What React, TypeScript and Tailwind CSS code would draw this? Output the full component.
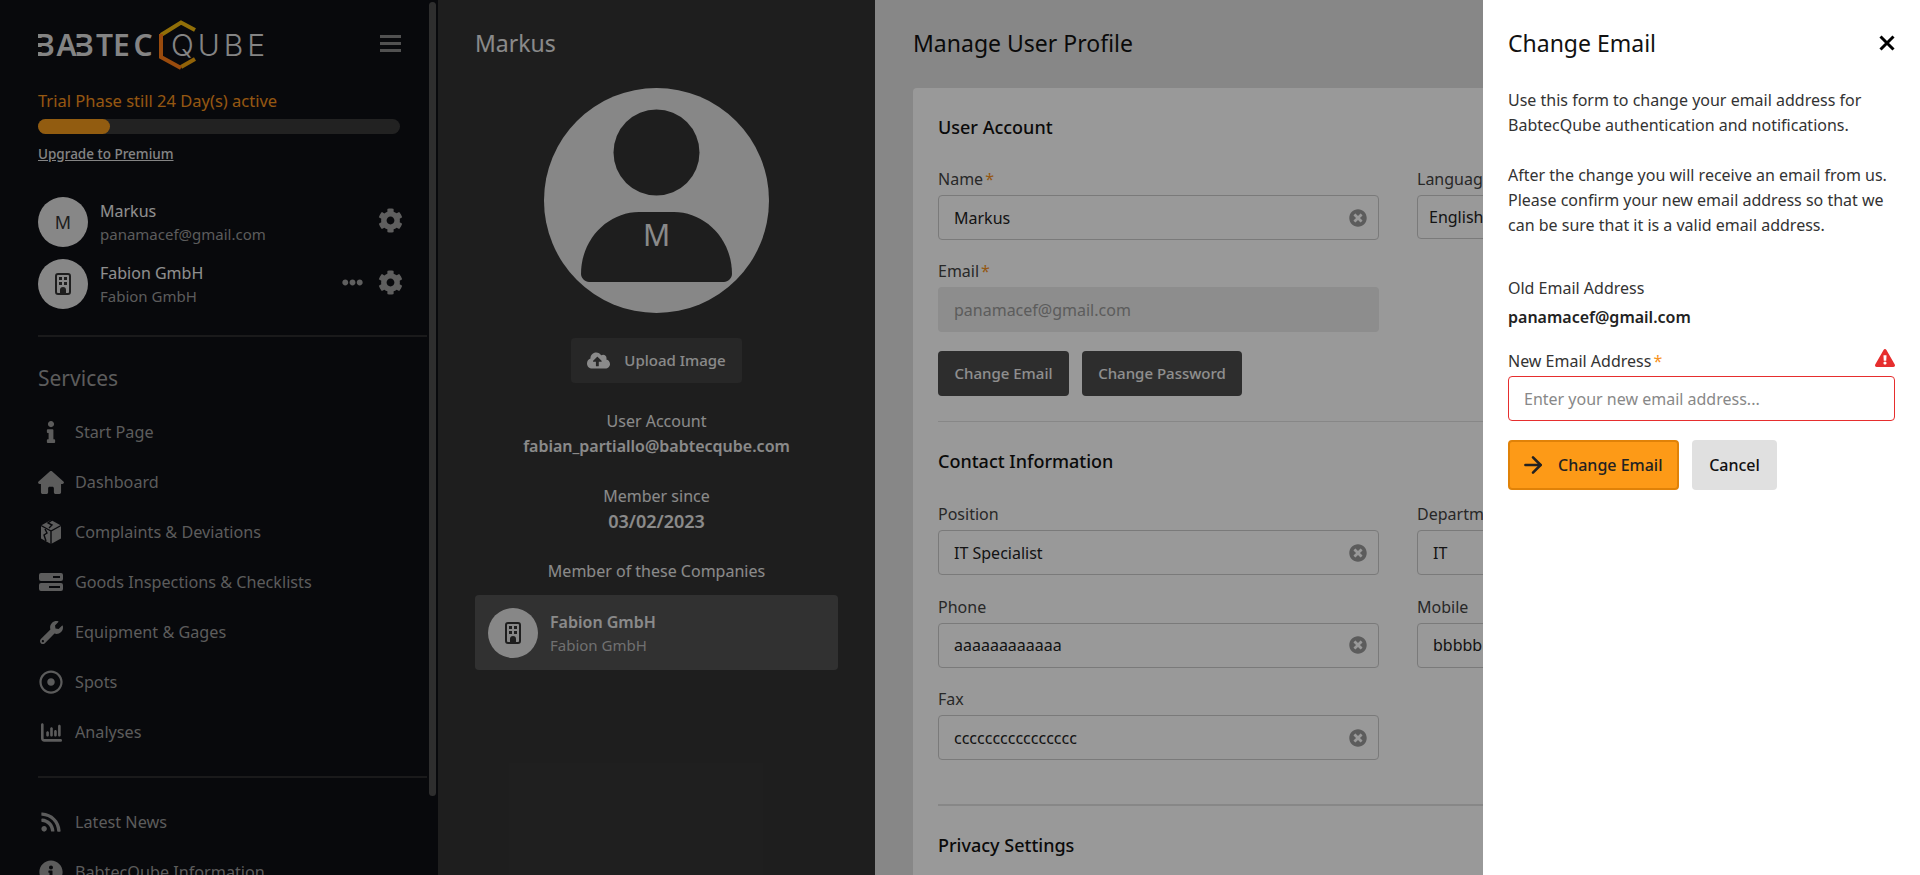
import React from 'react';
import { ArrowRight } from 'lucide-react';
import {
  FaCog,
  FaInfo,
  FaWrench,
  FaRegDotCircle,
  FaRss,
  FaInfoCircle,
  FaEllipsisH,
  FaCloudUploadAlt,
  FaTimesCircle,
  FaExclamationTriangle,
} from 'react-icons/fa';
import { FaHouse, FaChartColumn } from 'react-icons/fa6';

// Cracked cube used for complaints
const CubeIcon = () => (
  <svg width="22" height="24" viewBox="0 0 22 24" fill="currentColor">
    <path d="M11 0 L21 5.5 V18.5 L11 24 L1 18.5 V5.5 Z" />
    <path d="M1 5.5 L11 11 L21 5.5 M11 11 V24" fill="none" stroke="#0e0f14" strokeWidth="1.4" />
    <path d="M12 0 L8 3 L12 5 L9 8 M5 9 L7 13 L4 15 L6 21" fill="none" stroke="#0e0f14" strokeWidth="1.4" />
  </svg>
);

// Two stacked drives
const DrivesIcon = () => (
  <svg width="24" height="18" viewBox="0 0 24 18" fill="currentColor">
    <path fillRule="evenodd" d="M2 0 H22 a2 2 0 0 1 2 2 V6 a2 2 0 0 1 -2 2 H2 a2 2 0 0 1 -2 -2 V2 a2 2 0 0 1 2 -2 Z M14 3 V5 H21 V3 Z" />
    <path fillRule="evenodd" d="M2 10 H22 a2 2 0 0 1 2 2 V16 a2 2 0 0 1 -2 2 H2 a2 2 0 0 1 -2 -2 V12 a2 2 0 0 1 2 -2 Z M10 13 V15 H21 V13 Z" />
  </svg>
);

const BuildingIcon = () => (
  <svg width="16" height="22" viewBox="0 0 16 22" fill="none">
    <rect x="1" y="1" width="14" height="20" rx="2" stroke="#333" strokeWidth="2" />
    <path d="M4 4 H7 V7 H4 Z M9 4 H12 V7 H9 Z M4 9 H7 V12 H4 Z M9 9 H12 V12 H9 Z M5 21 V17 a3 3 0 0 1 6 0 V21 Z" fill="#333" />
  </svg>
);

const navItems = [
  { label: 'Start Page', icon: <FaInfo className="w-[12px] h-[22px]" /> },
  { label: 'Dashboard', icon: <FaHouse className="w-[26px] h-[23px]" /> },
  { label: 'Complaints & Deviations', icon: <CubeIcon /> },
  { label: 'Goods Inspections & Checklists', icon: <DrivesIcon /> },
  { label: 'Equipment & Gages', icon: <FaWrench className="w-[23px] h-[23px]" /> },
  { label: 'Spots', icon: <FaRegDotCircle className="w-[24px] h-[24px]" /> },
  { label: 'Analyses', icon: <FaChartColumn className="w-[23px] h-[21px]" /> },
];

const Field = ({ label, value, required }: { label: string; value: string; required?: boolean }) => (
  <div className="flex flex-col">
    <label className="text-[16px] leading-[20px] mb-[6px] text-[#444]">
      {label}
      {required && <span className="text-[#f7931e] ml-[2px]">*</span>}
    </label>
    <div className="h-[45px] rounded-[4px] border border-[#ccc] bg-white flex items-center pl-[15px] pr-[11px] text-[16px] text-[#222]">
      <span className="flex-1">{value}</span>
      <FaTimesCircle className="w-[18px] h-[18px] text-[#999]" />
    </div>
  </div>
);

const BuildingAvatar = () => (
  <div className="w-[50px] h-[50px] rounded-full bg-[#e2e2e2] flex items-center justify-center shrink-0">
    <BuildingIcon />
  </div>
);

const NavRow = ({ label, icon }: { label: string; icon: React.ReactNode }) => (
  <div className="h-[50px] flex items-center text-[16.2px] text-[#999]">
    <span className="w-[26px] mr-[11px] flex justify-center">{icon}</span>
    {label}
  </div>
);

export default function App() {
  return (
    <div className="relative h-[875px] w-[1920px] overflow-hidden flex font-['Noto_Sans',sans-serif]">
      {/* Sidebar */}
      <aside className="relative w-[438px] shrink-0 bg-[#0e0f14] overflow-hidden pl-[38px] pr-[11px] pt-[20px] text-[#eee]">
        <div className="flex items-center justify-between pr-[26px] h-[50px]">
          <svg width="228" height="50" viewBox="0 0 228 50" className="block">
            <text x="-3 18.5 36 58 75 95.5" y="36" fontFamily="'Noto Sans', sans-serif" fontWeight="600" fontSize="30" fill="#dcdcdc">
              BABTEC
            </text>
            {/* the logo's B has no stem between its arms */}
            <rect x="-2" y="18" width="6" height="5" fill="#0e0f14" />
            <rect x="-2" y="27" width="6" height="5" fill="#0e0f14" />
            <rect x="37" y="18" width="6" height="5" fill="#0e0f14" />
            <rect x="37" y="27" width="6" height="5" fill="#0e0f14" />
            <path d="M123 15 L143 2.5 L157 10" fill="none" stroke="#f2b90e" strokeWidth="4" />
            <path d="M143 47 L157 39" fill="none" stroke="#f2a50e" strokeWidth="4" />
            <path d="M123 14 V37 L143 48" fill="none" stroke="#ff7d16" strokeWidth="4" />
            <text x="133" y="36" fontFamily="Inter, sans-serif" fontWeight="300" fontSize="30" textLength="94" fill="#dcdcdc">
              QUBE
            </text>
          </svg>
          <div className="flex flex-col gap-[4px] w-[21px] mb-[3px]">
            <div className="h-[3px] bg-[#888]" />
            <div className="h-[3px] bg-[#888]" />
            <div className="h-[3px] bg-[#888]" />
          </div>
        </div>
        <div className="mt-[21px] pr-[27px]">
          <p className="text-[#f7931e] text-[16.5px] leading-[20px]">Trial Phase still 24 Day(s) active</p>
          <div className="h-[15px] mt-[8px] rounded-full bg-[#3a3a3a]">
            <div className="h-full w-[72px] rounded-full bg-[#f39a1b]" />
          </div>
          <a className="block mt-[11px] text-[13.5px] leading-[18px] font-medium underline text-[#ddd]">Upgrade to Premium</a>
        </div>

        <div className="mt-[34px] flex items-center gap-[12px] pr-[24px]">
          <div className="w-[50px] h-[50px] rounded-full bg-[#e2e2e2] text-[#333] text-[18px] flex items-center justify-center">M</div>
          <div className="flex-1">
            <p className="text-[16px] leading-[24px]">Markus</p>
            <p className="text-[15px] leading-[22px] text-[#999]">panamacef@gmail.com</p>
          </div>
          <FaCog className="w-[25px] h-[25px] mb-[3px] text-[#9e9e9e]" />
        </div>
        <div className="mt-[12px] flex items-center gap-[12px] pr-[24px]">
          <BuildingAvatar />
          <div className="flex-1">
            <p className="text-[16px] leading-[24px]">Fabion GmbH</p>
            <p className="text-[15px] leading-[22px] text-[#999]">Fabion GmbH</p>
          </div>
          <FaEllipsisH className="w-[21px] h-[21px] mb-[3px] text-[#9e9e9e] mr-[3px]" />
          <FaCog className="w-[25px] h-[25px] mb-[3px] text-[#9e9e9e]" />
        </div>

        <div className="h-[2px] bg-[#2c2c2e] mt-[26px]" />
        <h3 className="mt-[27px] text-[21px] leading-[28px] text-[#999]">Services</h3>
        <nav className="mt-[15px] flex flex-col">
          {navItems.map((item) => (
            <NavRow key={item.label} label={item.label} icon={item.icon} />
          ))}
        </nav>
        <div className="h-[2px] bg-[#2c2c2e] mt-[19px]" />
        <div className="mt-[19px] flex flex-col">
          <NavRow label="Latest News" icon={<FaRss className="w-[22px] h-[22px]" />} />
          <NavRow label="BabtecQube Information" icon={<FaInfoCircle className="w-[24px] h-[24px]" />} />
        </div>
        {/* scrollbar thumb */}
        <div className="absolute right-[2px] top-[2px] w-[7px] h-[794px] rounded-full bg-[#4e4e4e]" />
      </aside>

      {/* Profile panel */}
      <section className="w-[437px] shrink-0 bg-[#333] px-[37px] pt-[27px] text-[#e6e6e6] flex flex-col items-center">
        <h2 className="self-start text-[23px] leading-[32px]">Markus</h2>
        <div className="relative mt-[29px]">
          <svg width="225" height="225" viewBox="0 0 225 225" className="block">
            <circle cx="112.5" cy="112.5" r="112.5" fill="#e2e2e2" />
            <circle cx="112.5" cy="64.5" r="43" fill="#333" />
            <path d="M37 186 C37 150 65 124 95 124 H130 C160 124 188 150 188 186 C188 190 184 194 180 194 H45 C41 194 37 190 37 186 Z" fill="#333" />
          </svg>
          <span className="absolute left-0 right-0 top-[128px] text-center text-[30px] leading-[38px]">M</span>
        </div>
        <button className="mt-[25px] w-[171px] h-[45px] rounded-[4px] bg-[#414141] flex items-center justify-center gap-[14px] text-[15px] font-medium">
          <FaCloudUploadAlt className="w-[23px] h-[23px]" />
          Upload Image
        </button>
        <p className="mt-[26px] text-[16px] leading-[25px]">User Account</p>
        <p className="text-[16px] leading-[25px] font-semibold">fabian_partiallo@babtecqube.com</p>
        <p className="mt-[25px] text-[16px] leading-[25px]">Member since</p>
        <p className="text-[18px] leading-[25px] font-semibold">03/02/2023</p>
        <p className="mt-[25px] text-[16px] leading-[25px]">Member of these Companies</p>
        <div className="mt-[11px] self-stretch h-[75px] rounded-[4px] bg-[#525252] flex items-center gap-[12px] pl-[13px]">
          <BuildingAvatar />
          <div>
            <p className="text-[16px] leading-[24px] font-semibold">Fabion GmbH</p>
            <p className="text-[15px] leading-[22px] text-[#bbb]">Fabion GmbH</p>
          </div>
        </div>
      </section>

      {/* Main */}
      <main className="flex-1 bg-[#e2e2e2] pl-[38px] pr-[34px] pt-[27px] text-[#222]">
        <h1 className="text-[23px] leading-[32px] text-[#111]">Manage User Profile</h1>
        <div className="mt-[29px] rounded-[4px] bg-white px-[25px] pt-[26px] pb-[20px]">
          <h3 className="text-[18px] leading-[26px] font-medium text-[#111]">User Account</h3>
          <div className="mt-[29px] grid grid-cols-[441px_441px] gap-x-[38px] gap-y-[21px]">
            <Field label="Name" value="Markus" required />
            <div className="flex flex-col">
              <label className="text-[16px] leading-[20px] mb-[6px] text-[#444]">Language</label>
              <div className="h-[44px] rounded-[4px] border border-[#ccc] bg-white flex items-center pl-[11px] text-[16px] text-[#222]">English</div>
            </div>
            <div className="flex flex-col">
              <label className="text-[16px] leading-[20px] mb-[6px] text-[#444]">
                Email<span className="text-[#f7931e] ml-[2px]">*</span>
              </label>
              <div className="h-[45px] rounded-[4px] bg-[#ebebeb] flex items-center pl-[16px] text-[16px] text-[#999]">panamacef@gmail.com</div>
            </div>
          </div>
          <div className="mt-[19px] flex gap-[13px]">
            <button className="w-[131px] h-[45px] rounded-[4px] bg-[#4b4b4b] text-[#eee] text-[15px] font-medium">Change Email</button>
            <button className="w-[160px] h-[45px] rounded-[4px] bg-[#4b4b4b] text-[#eee] text-[15px] font-medium">Change Password</button>
          </div>
          <div className="h-px bg-[#e2e2e2] mt-[25px]" />
          <h3 className="mt-[26px] text-[18px] leading-[26px] font-medium text-[#111]">Contact Information</h3>
          <div className="mt-[30px] grid grid-cols-[441px_441px] gap-x-[38px] gap-y-[21.5px]">
            <Field label="Position" value="IT Specialist" />
            <Field label="Department" value="IT" />
            <Field label="Phone" value="aaaaaaaaaaaa" />
            <Field label="Mobile" value="bbbbbbbbbbbb" />
            <Field label="Fax" value="cccccccccccccccc" />
          </div>
          <div className="h-[2px] bg-[#e2e2e2] mt-[44px]" />
          <h3 className="mt-[26px] text-[18px] leading-[26px] font-medium text-[#111]">Privacy Settings</h3>
        </div>
      </main>

      {/* Dim overlay */}
      <div className="absolute inset-0 bg-black/40" />

      {/* Change email drawer */}
      <div className="absolute right-0 top-0 bottom-0 w-[437px] bg-white pl-[25px] pr-[25px] pt-[27px] text-[#333]">
        <div className="flex items-center justify-between">
          <h2 className="text-[23px] leading-[32px] text-[#111]">Change Email</h2>
          <svg width="16" height="16" viewBox="0 0 16 16" className="block">
            <path d="M1.5 1.5 L14.5 14.5 M14.5 1.5 L1.5 14.5" stroke="#000" strokeWidth="3" />
          </svg>
        </div>
        <p className="mt-[29px] text-[16px] leading-[25px]">
          Use this form to change your email address for
          <br />
          BabtecQube authentication and notifications.
        </p>
        <p className="mt-[25px] text-[16px] leading-[25px]">
          After the change you will receive an email from us.
          <br />
          Please confirm your new email address so that we
          <br />
          can be sure that it is a valid email address.
        </p>
        <p className="mt-[38px] text-[16px] leading-[25px]">Old Email Address</p>
        <p className="mt-[4px] text-[16px] leading-[25px] font-semibold text-[#222]">panamacef@gmail.com</p>
        <div className="mt-[19px] flex items-start justify-between h-[24px]">
          <label className="text-[16px] leading-[24px]">
            New Email Address<span className="text-[#f7931e] ml-[2px]">*</span>
          </label>
          <FaExclamationTriangle className="w-[20px] h-[18px] text-[#e62e2e]" />
        </div>
        <input
          readOnly
          placeholder="Enter your new email address..."
          className="mt-[3px] block w-full h-[45px] rounded-[4px] border border-[#e62e2e] px-[15px] text-[16px] placeholder:text-[#888] outline-none"
        />
        <div className="mt-[19px] flex gap-[13px]">
          <button className="w-[171px] h-[50px] rounded-[4px] bg-[#fd9a17] border-2 border-[#e08208] flex items-center pl-[10px] gap-[12px] text-[16px] font-medium text-[#222]">
            <ArrowRight className="w-[26px] h-[26px]" strokeWidth={2.4} />
            Change Email
          </button>
          <button className="w-[85px] h-[50px] rounded-[4px] bg-[#e0e0e0] text-[16px] font-medium text-[#111]">Cancel</button>
        </div>
      </div>
    </div>
  );
}
